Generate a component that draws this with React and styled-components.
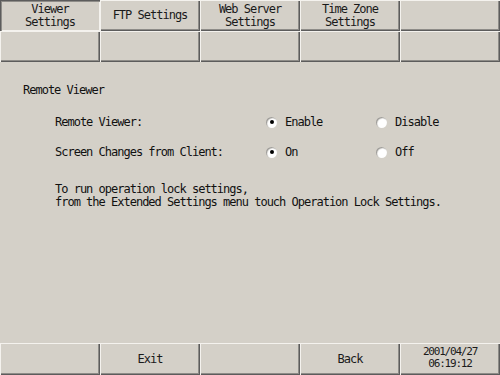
import React from 'react';
import styled, { createGlobalStyle, css } from 'styled-components';

const GlobalStyle = createGlobalStyle`
  html, body {
    margin: 0;
    padding: 0;
    background: #d4d0c8;
  }
  body {
    font-family: "DejaVu Sans Mono", "Liberation Mono", monospace;
    font-size: 12px;
    letter-spacing: -1px;
    color: #111;
  }
`;

const raised = css`
  box-shadow: inset 1px 1px 0 #f4f2ee, inset -1px -1px 0 #5c5c5c, inset -2px -2px 0 #8e8c88;
`;

const pressed = css`
  box-shadow: inset 1px 1px 0 #5c5c5c, inset 2px 2px 0 #8e8c88, inset -1px -1px 0 #f4f2ee;
`;

const Screen = styled.div`
  width: 500px;
  height: 375px;
  display: flex;
  flex-direction: column;
  background: #d4d0c8;
  overflow: hidden;
`;

const ButtonRow = styled.div`
  display: grid;
  grid-template-columns: repeat(5, 100px);
  height: ${(p) => p.$height}px;
`;

const Cell = styled.div`
  display: flex;
  align-items: center;
  justify-content: center;
  text-align: center;
  line-height: 13px;
  white-space: pre-line;
  color: #1a1a1a;
  ${(p) => (p.$pressed ? pressed : raised)}
`;

const DateCell = styled(Cell)`
  font-size: 11px;
  letter-spacing: -1.2px;
  line-height: 12px;
  padding-bottom: 3px;
`;

const Content = styled.div`
  flex: 1;
  padding: 22px 0 0 23px;
`;

const Title = styled.div`
  line-height: 13px;
`;

const Options = styled.div`
  margin: 10px 0 0 32px;
`;

const OptionRow = styled.div`
  display: grid;
  grid-template-columns: 211px 110px 110px;
  align-items: center;
  height: 30px;
`;

const Choice = styled.label`
  display: flex;
  align-items: center;
  gap: 8px;
`;

const Radio = styled.span`
  position: relative;
  width: 11px;
  height: 11px;
  border-radius: 50%;
  background: radial-gradient(circle at 62% 62%, #ffffff 45%, #e4e2de 75%, #b8b6b2 100%);
  box-shadow: inset 1px 1px 1px #9a9894;

  &::after {
    content: '';
    display: ${(p) => (p.$checked ? 'block' : 'none')};
    position: absolute;
    left: 3.5px;
    top: 3.5px;
    width: 4px;
    height: 4px;
    border-radius: 50%;
    background: #000;
  }
`;

const Note = styled.p`
  margin: 16px 0 0 32px;
  line-height: 13px;
  white-space: pre-line;
`;

const tabs = ['Viewer\nSettings', 'FTP Settings', 'Web Server\nSettings', 'Time Zone\nSettings', ''];
const footer = ['', 'Exit', '', 'Back'];

const options = [
  { label: 'Remote Viewer:', choices: ['Enable', 'Disable'] },
  { label: 'Screen Changes from Client:', choices: ['On', 'Off'] },
];

const App = () => (
  <>
    <GlobalStyle />
    <Screen>
      <ButtonRow $height={31}>
        {tabs.map((t, i) => (
          <Cell key={i} $pressed={i === 0}>{t}</Cell>
        ))}
      </ButtonRow>
      <ButtonRow $height={31}>
        {[0, 1, 2, 3, 4].map((i) => (
          <Cell key={i} />
        ))}
      </ButtonRow>
      <Content>
        <Title>Remote Viewer</Title>
        <Options>
          {options.map((o) => (
            <OptionRow key={o.label}>
              <span>{o.label}</span>
              {o.choices.map((c, i) => (
                <Choice key={c}>
                  <Radio $checked={i === 0} />
                  {c}
                </Choice>
              ))}
            </OptionRow>
          ))}
        </Options>
        <Note>
          {`To run operation lock settings,
from the Extended Settings menu touch Operation Lock Settings.`}
        </Note>
      </Content>
      <ButtonRow $height={32}>
        {footer.map((f, i) => (
          <Cell key={i}>{f}</Cell>
        ))}
        <DateCell>{`2001/04/27\n06:19:12`}</DateCell>
      </ButtonRow>
    </Screen>
  </>
);

export default App;
